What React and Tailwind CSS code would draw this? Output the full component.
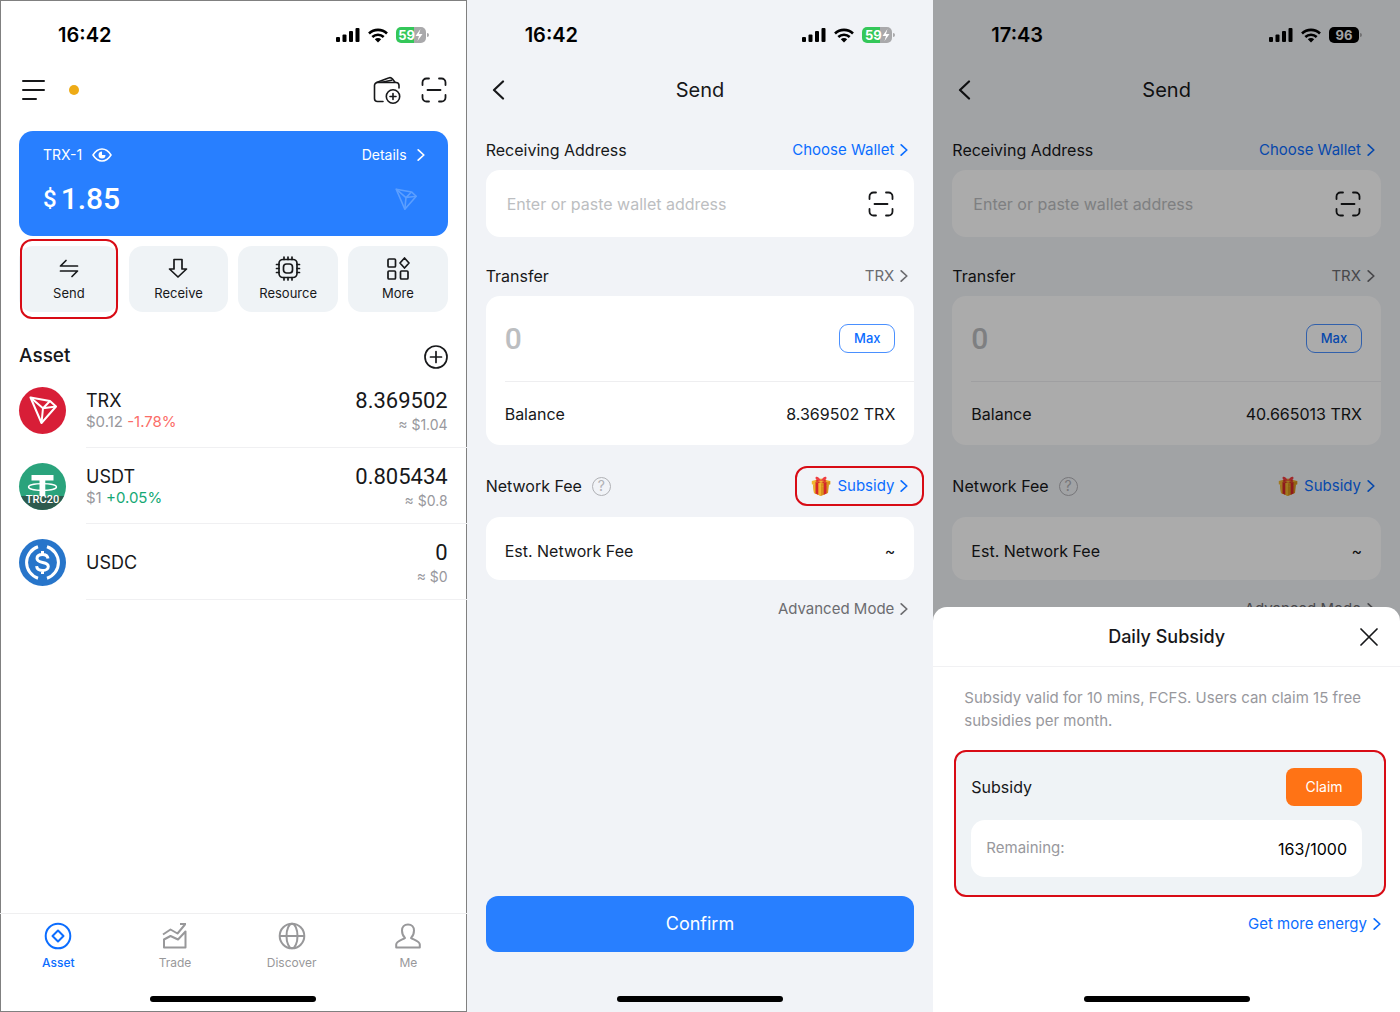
const ACTIONS = [
  { id: 'send', label: 'Send', highlighted: true },
  { id: 'receive', label: 'Receive' },
  { id: 'resource', label: 'Resource' },
  { id: 'more', label: 'More' },
]

const ASSETS = [
  { id: 'trx', name: 'TRX', price: '$0.12', change: '-1.78%', up: false, amount: '8.369502', value: '≈ $1.04' },
  { id: 'usdt', name: 'USDT', price: '$1', change: '+0.05%', up: true, amount: '0.805434', value: '≈ $0.8' },
  { id: 'usdc', name: 'USDC', amount: '0', value: '≈ $0' },
]

const TABS = [
  { id: 'asset', label: 'Asset', active: true },
  { id: 'trade', label: 'Trade' },
  { id: 'discover', label: 'Discover' },
  { id: 'me', label: 'Me' },
]

const Chevron = () => (
  <svg viewBox="0 0 8 14" className="w-2 h-3.5 shrink-0" fill="none" stroke="currentColor" strokeWidth="1.7" strokeLinecap="round" strokeLinejoin="round">
    <path d="M1.2 1.8 6.8 7l-5.6 5.2" />
  </svg>
)

const ScanIcon = () => (
  <svg viewBox="0 0 26 26" className="w-[26px] h-[26px]" fill="none" stroke="currentColor" strokeWidth="1.8" strokeLinecap="round">
    <path d="M1.5 8V5.5a4 4 0 0 1 4-4H8M18 1.5h2.5a4 4 0 0 1 4 4V8M24.5 18v2.500a4 4 0 0 1-4 4H18M8 24.500H5.500a4 4 0 0 1-4-4V18M6.500 13h13" />
  </svg>
)

const WalletIcon = () => (
  <svg viewBox="0 0 28 28" className="w-7 h-7" fill="none" stroke="currentColor" strokeWidth="1.6" strokeLinecap="round" strokeLinejoin="round">
    <path d="M10 25.500H4.500a3 3 0 0 1-3-3V9.500a3 3 0 0 1 3-3H23a3 3 0 0 1 3 3V12" />
    <path d="M3.500 6.500 15.500 2a3.500 3.500 0 0 1 4 1L22 6.200M9 6.300l9.500-2" />
    <circle cx="20" cy="20.500" r="6.700" />
    <path d="M20 17.500v6M17 20.500h6" />
  </svg>
)

const TronMark = ({ className }) => (
  <svg viewBox="0 0 28 28" className={className} fill="none" stroke="currentColor" strokeWidth="2" strokeLinejoin="round">
    <path d="M1.500 1.500 21 5l6 5.500L12.500 27Z" />
    <path d="M1.500 1.500 14 12.200 12.500 27M14 12.200 27 10.500M14 12.200 21 5" />
  </svg>
)

const TrxCoin = () => (
  <span className="w-[47px] h-[47px] rounded-full bg-[#d81e37] text-white flex items-center justify-center">
    <TronMark className="w-7 h-7" />
  </span>
)

const UsdtCoin = () => (
  <span className="relative w-[47px] h-[47px] rounded-full bg-[#2aa37c] overflow-hidden flex justify-center">
    <svg viewBox="0 0 47 47" className="w-full h-full">
      <path d="M12.500 12h22v5.500h-8.200V37h-5.800V17.500h-8Z" fill="#fff" />
      <ellipse cx="23.500" cy="24" rx="14" ry="3.300" fill="none" stroke="#fff" strokeWidth="1.300" />
      <path d="M0 33h47v14H0Z" fill="#2d5a4e" />
    </svg>
    <span className="absolute bottom-1 text-white text-[11px] leading-3 font-medium font-['Roboto',sans-serif]">TRC20</span>
  </span>
)

const UsdcCoin = () => (
  <svg viewBox="0 0 47 47" className="w-[47px] h-[47px]" fill="none" stroke="#fff">
    <circle cx="23.500" cy="23.500" r="23.500" fill="#2775ca" stroke="none" />
    <path d="M19 7.800a16.500 16.500 0 0 0 0 31.400M28 7.800a16.500 16.500 0 0 1 0 31.400" strokeWidth="3" />
    <path d="M29 19.500c-.4-2.600-2.400-4-5.500-4-3.300 0-5.500 1.500-5.500 4 0 5.600 11.300 2.300 11.300 7.900 0 2.500-2.400 4.100-5.800 4.100-3.300 0-5.600-1.500-5.900-4.300M23.500 12v3.500M23.500 31.500V35" strokeWidth="3" />
  </svg>
)

const COINS = { trx: TrxCoin, usdt: UsdtCoin, usdc: UsdcCoin }

const ActionIcon = ({ id }) => (
  <svg viewBox="0 0 26 26" className="w-[26px] h-[26px]" fill="none" stroke="currentColor" strokeWidth="1.7" strokeLinejoin="round" strokeLinecap="round">
    {id === 'send' && <path d="M21.500 11H4.500L10 5.500M4.500 16h17L16 21.500" />}
    {id === 'receive' && <path d="M9 4.500h8V14h4.500L13 22 4.500 14H9Z" />}
    {id === 'resource' && (
      <>
        <rect x="4" y="4.500" width="18" height="18" rx="4" />
        <rect x="8.500" y="9" width="9" height="9" rx="3" />
        <path d="M9 4.500V2M13 4.500V2M17 4.500V2M9 25v-2.500M13 25v-2.500M17 25v-2.500M4 9.500H1.500M4 13.500H1.500M4 17.500H1.500M24.500 9.500H22M24.500 13.500H22M24.500 17.500H22" />
      </>
    )}
    {id === 'more' && (
      <>
        <rect x="3" y="4" width="7.500" height="8" rx="1" />
        <rect x="3" y="16" width="7.500" height="8" rx="1" />
        <rect x="15.500" y="16" width="7.500" height="8" rx="1" />
        <path d="m19.500 3 4.500 5-4.500 5L15 8Z" />
      </>
    )}
  </svg>
)

const TabIcon = ({ id }) => (
  <svg viewBox="0 0 28 28" className="w-7 h-7" fill="none" stroke="currentColor" strokeWidth="2" strokeLinejoin="round">
    {id === 'asset' && (
      <>
        <circle cx="14" cy="14" r="12.300" />
        <path d="m14 8.500 5.500 5.500-5.500 5.500L8.500 14Z" />
      </>
    )}
    {id === 'trade' && <path d="M2 12.500 9.500 7.500l7 4L24 2.500M19 2h6M3 25.500V17.500L9.500 14l7.500 3.500L24.500 9.500v16Z" />}
    {id === 'discover' && (
      <>
        <circle cx="14" cy="14" r="12.300" />
        <ellipse cx="14" cy="14" rx="5.500" ry="12.300" />
        <path d="M1.700 14h24.600" />
      </>
    )}
    {id === 'me' && (
      <path d="M14 2.500c-3.800 0-6 2.600-6 6 0 3.200 1 5.600 3 7.500-2 1.500-8.800 3.300-8.800 6.500v3h23.600v-3c0-3.200-6.800-5-8.800-6.500 2-1.900 3-4.300 3-7.500 0-3.400-2.200-6-6-6Z" />
    )}
  </svg>
)

const GiftIcon = () => (
  <svg viewBox="0 0 20 20" className="w-5 h-5">
    <path d="M2 8.500 10 10.500 18 8.500 17 17l-7 3-7-3Z" fill="#d9921b" />
    <path d="M2 8.500 10 10.500V20l-7-3Z" fill="#efb32d" />
    <path d="M.800 5 10 2.500 19.200 5v3.200L10 11 .800 8.200Z" fill="#f0b733" />
    <path d="M10 7.500 19.200 5v3.200L10 11Z" fill="#d9921b" />
    <path d="M4.500 6v11.600l2.800 1.200V6.800ZM12.700 6.800v12l2.800-1.200V6Z" fill="#d4262c" />
    <path d="M4.500 5.500 13 3.200l2.500 1.300-8.200 2.600ZM15.500 5.500 7 3.200 4.500 4.500l8.200 2.600Z" fill="#d4262c" />
    <path d="M10 4.500C8 .500 4.500-.500 4.500 2c0 2 3 2.800 5.500 2.500 2.500.3 5.500-.5 5.500-2.500 0-2.500-3.500-1.500-5.500 2.500Z" fill="#ef3e42" />
  </svg>
)

const Battery = ({ level, charging }) => (
  <span className="flex items-center">
    {charging ? (
      <span className="flex items-center justify-center w-[30px] h-4 rounded-[5px] bg-linear-to-r from-[#34c759] from-60% to-[#a9a9ab] to-60% text-white text-[13px] leading-4 font-bold">
        {level}
        <svg viewBox="0 0 8 12" className="w-2 h-3" fill="currentColor">
          <path d="M5.500 0 .500 7H4L2.500 12l5-7H4Z" />
        </svg>
      </span>
    ) : (
      <span className="w-[30px] h-4 rounded-[5px] bg-black text-[#f1f3f7] text-[13px] leading-4 font-bold text-center">{level}</span>
    )}
    <span className="w-0.5 h-1 ml-px rounded-r bg-[#a9a9ab]" />
  </span>
)

const StatusBar = ({ time, level, charging }) => (
  <div className="h-[70px] pl-[58px] pr-[38px] flex items-center justify-between text-black">
    <span className="text-xl font-semibold">{time}</span>
    <div className="flex items-center gap-2">
      <svg viewBox="0 0 24 16" className="w-6 h-4" fill="currentColor">
        <rect x="0" y="10" width="4" height="5" rx="1" />
        <rect x="6.500" y="7.500" width="4" height="7.500" rx="1" />
        <rect x="13" y="4" width="4" height="11" rx="1" />
        <rect x="19.500" y="1" width="4" height="14" rx="1" />
      </svg>
      <svg viewBox="0 0 20 15" className="w-5 h-[15px]" fill="none" stroke="currentColor" strokeWidth="2.600">
        <path d="M1 5.500a13 13 0 0 1 18 0M4.300 9a8.300 8.300 0 0 1 11.400 0" />
        <path d="M10 14.500 6.800 11.300a4.600 4.600 0 0 1 6.400 0Z" fill="currentColor" stroke="none" />
      </svg>
      <Battery level={level} charging={charging} />
    </div>
  </div>
)

const HomeIndicator = () => (
  <div className="flex justify-center pb-2.5">
    <span className="w-[166px] h-1.5 rounded-full bg-black" />
  </div>
)

const WalletScreen = () => (
  <section className="flex flex-col bg-white ring-1 ring-inset ring-[#808080]">
    <StatusBar time="16:42" level={59} charging />
    <header className="h-10 pl-[21px] pr-5 flex items-center justify-between">
      <div className="flex items-center gap-6">
        <button type="button" aria-label="Menu">
          <svg viewBox="0 0 24 22" className="w-6 h-[22px]" stroke="currentColor" strokeWidth="2" strokeLinecap="round">
            <path d="M2 2h21M2 11h21M2 20h13" />
          </svg>
        </button>
        <span className="w-2.5 h-2.5 rounded-full bg-[#eeab16]" />
      </div>
      <div className="flex items-center gap-5">
        <button type="button" aria-label="Add wallet"><WalletIcon /></button>
        <button type="button" aria-label="Scan"><ScanIcon /></button>
      </div>
    </header>

    <div className="px-[19px] mt-[21px]">
      <div className="h-[105px] rounded-[14px] bg-[#287fff] text-white pl-6 pr-[23px] pt-3.5">
        <div className="flex items-center justify-between text-sm leading-5">
          <span className="flex items-center gap-2.5">
            TRX-1
            <svg viewBox="0 0 20 14" className="w-5 h-3.5" fill="none" stroke="currentColor" strokeWidth="1.500">
              <path d="M1 7c2.500-4 5.500-6 9-6s6.500 2 9 6c-2.500 4-5.500 6-9 6S3.500 11 1 7Z" />
              <path d="M10 3.500A3.500 3.500 0 1 0 13.500 7H10Z" fill="currentColor" stroke="none" />
            </svg>
          </span>
          <button type="button" className="flex items-center gap-2.5">Details <Chevron /></button>
        </div>
        <div className="flex items-center justify-between mt-3.5 pr-2">
          <span className="flex items-center gap-1 font-medium font-['Roboto',sans-serif]">
            <span className="text-2xl leading-10">$</span>
            <span className="text-[30px] leading-10">1.85</span>
          </span>
          <TronMark className="w-[22px] h-[22px] text-[#5c9fff]" />
        </div>
      </div>

      <div className="grid grid-cols-4 gap-2.5 mt-2.5">
        {ACTIONS.map((action) => (
          <button
            key={action.id}
            type="button"
            className="relative h-[66px] rounded-[14px] bg-[#eff3f6] flex flex-col items-center justify-center gap-0.5 text-[13px] leading-5"
          >
            <ActionIcon id={action.id} />
            {action.label}
            {action.highlighted && (
              <span className="absolute -inset-y-[7px] inset-x-px rounded-[12px] border-2 border-[#d80b15]" />
            )}
          </button>
        ))}
      </div>

      <div className="flex items-center justify-between h-[59px] mt-[15px]">
        <h2 className="text-[19px] font-medium">Asset</h2>
        <button type="button" aria-label="Add asset">
          <svg viewBox="0 0 24 24" className="w-6 h-6" fill="none" stroke="currentColor" strokeWidth="1.700" strokeLinecap="round">
            <circle cx="12" cy="12" r="11" />
            <path d="M12 6.500v11M6.500 12h11" />
          </svg>
        </button>
      </div>
    </div>

    <ul className="-mt-3.5 pl-[19px]">
      {ASSETS.map((asset) => {
        const Coin = COINS[asset.id]
        return (
          <li key={asset.id} className="flex items-center gap-5">
            <Coin />
            <div className="flex-1 h-[76px] pt-[3px] pr-[19px] border-b border-[#f0f0f2] flex items-center justify-between">
              <div>
                <p className="text-lg leading-[22px]">{asset.name}</p>
                {asset.price && (
                  <p className="text-[15px] leading-5 text-[#98989d]">
                    {asset.price}{' '}
                    <span className={asset.up ? 'text-[#14a874]' : 'text-[#fb6d68]'}>{asset.change}</span>
                  </p>
                )}
              </div>
              <div className="text-right">
                <p className="text-[22px] leading-7 font-['Roboto',sans-serif]">{asset.amount}</p>
                <p className="text-sm leading-5 text-[#98989d]">{asset.value}</p>
              </div>
            </div>
          </li>
        )
      })}
    </ul>

    <nav className="mt-auto border-t border-[#efeff0] grid grid-cols-4 pt-2 pb-6">
      {TABS.map((tab) => (
        <a
          key={tab.id}
          href={`#${tab.id}`}
          className={`flex flex-col items-center gap-1 text-xs leading-[18px] ${tab.active ? 'font-medium text-[#0b6dff]' : 'text-[#98989a]'}`}
        >
          <TabIcon id={tab.id} />
          {tab.label}
        </a>
      ))}
    </nav>
    <HomeIndicator />
  </section>
)

const SendScreen = ({ id, time, level, charging, balance, highlighted, children }) => (
  <section className="relative flex flex-col bg-[#f1f3f7]">
    <StatusBar time={time} level={level} charging={charging} />
    <header className="h-10 grid grid-cols-3 items-center">
      <button type="button" aria-label="Back" className="justify-self-start ml-[25px]">
        <svg viewBox="0 0 13 20" className="w-[13px] h-5" fill="none" stroke="currentColor" strokeWidth="2.200" strokeLinecap="round" strokeLinejoin="round">
          <path d="M11 1.500 2 10l9 8.500" />
        </svg>
      </button>
      <h1 className="text-xl text-center">Send</h1>
    </header>

    <div className="px-[19px] mt-5">
      <div className="h-10 pr-1.5 flex items-center justify-between">
        <label htmlFor={`${id}-address`}>Receiving Address</label>
        <button type="button" className="flex items-center gap-1.5 text-[15px] text-[#0b6dff]">Choose Wallet <Chevron /></button>
      </div>
      <div className="h-[67px] rounded-[14px] bg-white pl-[21px] pr-5 flex items-center">
        <input
          id={`${id}-address`}
          placeholder="Enter or paste wallet address"
          className="flex-1 min-w-0 outline-none placeholder:text-[#bcbec1]"
        />
        <button type="button" aria-label="Scan address"><ScanIcon /></button>
      </div>

      <div className="h-10 pr-1.5 mt-[19px] flex items-center justify-between">
        <label htmlFor={`${id}-amount`}>Transfer</label>
        <button type="button" className="flex items-center gap-1.5 text-[15px] text-[#6c6c70]">TRX <Chevron /></button>
      </div>
      <div className="rounded-[14px] bg-white pl-[19px]">
        <div className="h-[86px] border-b border-[#eeeef0] pr-[19px] flex items-center justify-between">
          <input
            id={`${id}-amount`}
            placeholder="0"
            className="w-40 text-[30px] leading-10 font-medium font-['Roboto',sans-serif] outline-none placeholder:text-[#bcbec1]"
          />
          <button type="button" className="h-[29px] w-14 rounded-[9px] border border-[#4a90ff] text-[#0b6dff] text-[13px] font-medium">Max</button>
        </div>
        <div className="h-[63px] pr-[19px] flex items-center justify-between">
          <span>Balance</span>
          <span>{balance}</span>
        </div>
      </div>

      <div className="h-10 pr-1.5 mt-[21px] flex items-center justify-between">
        <span className="flex items-center gap-2.5">
          Network Fee
          <button type="button" aria-label="About network fee" className="w-[19px] h-[19px] rounded-full border border-[#b0b1b5] text-[#b0b1b5] text-sm leading-4">
            ?
          </button>
        </span>
        <button type="button" className="relative h-6 flex items-center gap-1.5 text-[15px] text-[#0b6dff]">
          <GiftIcon /> Subsidy <Chevron />
          {highlighted && (
            <span className="absolute -inset-x-4 -inset-y-2 rounded-[12px] border-2 border-[#d80b15]" />
          )}
        </button>
      </div>
      <div className="h-[63px] mt-[11px] rounded-[14px] bg-white px-[19px] pt-1 flex items-center justify-between">
        <span>Est. Network Fee</span>
        <span>~</span>
      </div>
      <div className="h-10 mt-[9px] pr-1.5 flex items-center justify-end">
        <button type="button" className="flex items-center gap-1.5 text-[15px] text-[#6c6c70]">Advanced Mode <Chevron /></button>
      </div>
    </div>

    <div className="mt-auto px-[19px] pb-11">
      <button type="button" className="w-full h-14 rounded-[12px] bg-[#287fff] text-white text-lg">Confirm</button>
    </div>
    <HomeIndicator />
    {children}
  </section>
)

const SubsidySheet = () => (
  <div className="absolute inset-0 bg-black/33 flex flex-col justify-end">
    <div role="dialog" aria-label="Daily Subsidy" className="bg-white rounded-t-[14px]">
      <div className="h-[60px] border-b border-[#f1f1f3] grid grid-cols-[1fr_auto_1fr] items-center">
        <h2 className="col-start-2 text-lg font-medium">Daily Subsidy</h2>
        <button type="button" aria-label="Close" className="justify-self-end mr-[22px]">
          <svg viewBox="0 0 18 18" className="w-[18px] h-[18px]" stroke="currentColor" strokeWidth="1.700" strokeLinecap="round">
            <path d="m1 1 16 16M17 1 1 17" />
          </svg>
        </button>
      </div>
      <p className="mt-[19px] pl-[31px] pr-6 text-[15px] leading-[23px] text-[#98989d]">
        Subsidy valid for 10 mins, FCFS. Users can claim 15 free subsidies per month.
      </p>
      <div className="mt-[18px] ml-[21px] mr-3.5 rounded-[12px] border-2 border-[#d80b15] bg-[#eff3f6] h-[147px] pl-[15px] pr-[22px] pt-4">
        <div className="flex items-center justify-between">
          <span>Subsidy</span>
          <button type="button" className="w-[76px] h-[38px] rounded-[8px] bg-[#ff7315] text-white text-sm">Claim</button>
        </div>
        <div className="h-[57px] mt-3.5 rounded-[14px] bg-white px-[15px] flex items-center justify-between">
          <span className="text-[15px] text-[#98989d]">Remaining:</span>
          <span className="text-black">163/1000</span>
        </div>
      </div>
      <div className="flex justify-end mt-[15px] pr-[19px] pb-[60px]">
        <a href="#energy" className="flex items-center gap-1.5 text-[15px] leading-6 text-[#0b6dff]">Get more energy <Chevron /></a>
      </div>
      <HomeIndicator />
    </div>
  </div>
)

const App = () => (
  <main className="min-h-screen grid grid-cols-3 text-base text-[#17181a] font-['Inter',sans-serif]">
    <WalletScreen />
    <SendScreen id="send" time="16:42" level={59} charging balance="8.369502 TRX" highlighted />
    <SendScreen id="claim" time="17:43" level={96} balance="40.665013 TRX">
      <SubsidySheet />
    </SendScreen>
  </main>
)

export default App
